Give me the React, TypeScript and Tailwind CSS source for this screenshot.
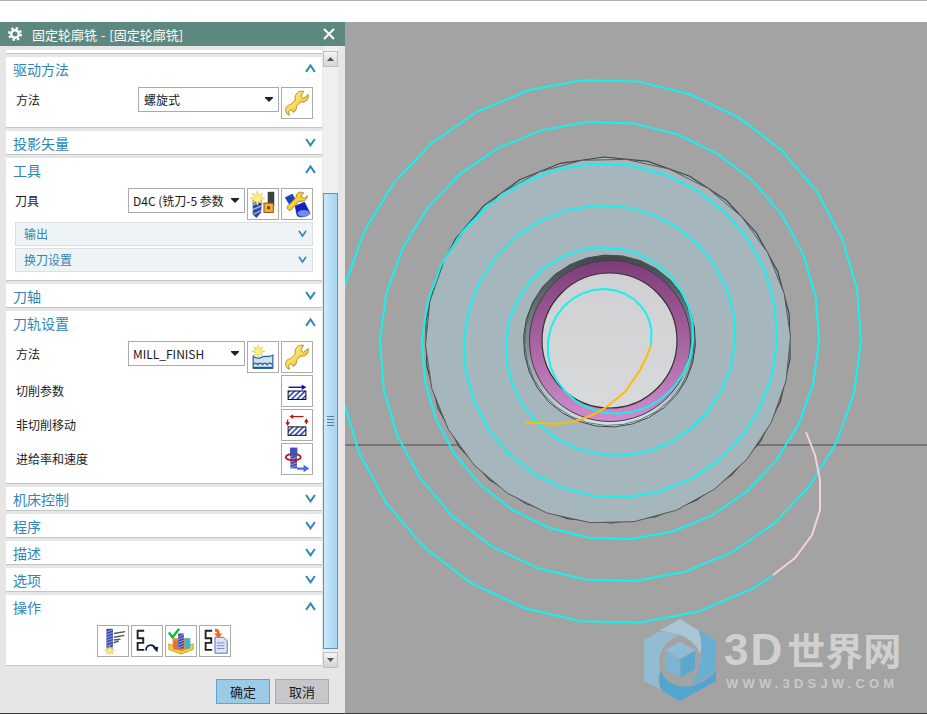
import React from "react";

const CJK = "'Noto Sans CJK SC','Liberation Sans',sans-serif";

function spiralPoints() {
  const pts: string[] = ["651,345"];
  const end = 5.847;
  const step = 1 / 30;
  const put = (t: number) => {
    const a = t * 2 * Math.PI;
    const r = 41 + 42 * t;
    pts.push(`${(610 + r * Math.cos(a)).toFixed(1)},${(341 - r * Math.sin(a)).toFixed(1)}`);
  };
  for (let i = 0; i * step < end; i++) put(i * step);
  pts.push("773,575");
  return pts.join(" ");
}

function ngon(cx: number, cy: number, r: number, n: number, rot = 0) {
  const pts: string[] = [];
  for (let i = 0; i < n; i++) {
    const a = (i / n) * 2 * Math.PI + rot;
    pts.push(`${(cx + r * Math.cos(a)).toFixed(1)},${(cy + r * Math.sin(a)).toFixed(1)}`);
  }
  return pts.join(" ");
}

function Chevron({ up, small }: { up?: boolean; small?: boolean }) {
  const s = small ? 9 : 11;
  return (
    <svg width={s} height={s * 0.8} viewBox="0 0 11 9" className="shrink-0">
      <path d={up ? "M1 8 L5.5 1.5 L10 8" : "M1 1 L5.5 7.5 L10 1"} fill="none" stroke="#2f8ab8" strokeWidth={small ? 2 : 2.1} />
    </svg>
  );
}

function Wrench({ id }: { id: string }) {
  return (
    <svg width="30" height="30" viewBox="0 0 32 32">
      <defs>
        <linearGradient id={id} x1="0" y1="0" x2="1" y2="1">
          <stop offset="0" stopColor="#fff6b8" />
          <stop offset="0.5" stopColor="#f9d955" />
          <stop offset="1" stopColor="#d99a18" />
        </linearGradient>
      </defs>
      <path
        d="M28 7 L23 11 L20 9 L23 3.500 C18 2.500 13.500 6 14 11.500 L14 13 L9 18 C7 18 4 19 4 23 C3.500 26 6 29 8 29 L7 25 L10 23 L12 26 C15 25 16 21 15.500 19 L20 15 C25 16 29 12 28 7Z"
        fill={`url(#${id})`}
        stroke="#b58a24"
        strokeWidth="1"
        strokeLinejoin="round"
      />
    </svg>
  );
}

function Hatch({ id, y = 15 }: { id: string; y?: number }) {
  return (
    <>
      <defs>
        <pattern id={id} width="4" height="4" patternUnits="userSpaceOnUse" patternTransform="rotate(45)">
          <rect width="4" height="4" fill="#ffffff" />
          <rect width="1.6" height="4" fill="#2233aa" />
        </pattern>
      </defs>
      <rect x="6.500" y={y} width="19" height="9" fill={`url(#${id})`} stroke="#000" strokeWidth="1" />
    </>
  );
}

function Star({ x, y, r = 5 }: { x: number; y: number; r?: number }) {
  const p: string[] = [];
  for (let i = 0; i < 16; i++) {
    const a = (i / 16) * Math.PI * 2;
    const q = i % 2 ? r * 0.45 : r;
    p.push(`${(x + q * Math.cos(a)).toFixed(1)},${(y + q * Math.sin(a)).toFixed(1)}`);
  }
  return <polygon points={p.join(" ")} fill="#fff27a" stroke="#c9b83c" strokeWidth="0.5" />;
}

function Drill({ x, y, w = 6, h = 18 }: { x: number; y: number; w?: number; h?: number }) {
  const lines = [];
  for (let i = 2; i < h; i += 3) {
    lines.push(<path key={i} d={`M${x} ${y + i + 1.5} L${x + w} ${y + i - 1}`} stroke="#9aa7e8" strokeWidth="1" />);
  }
  return (
    <g>
      <rect x={x} y={y} width={w} height={h} fill="#3b4aa8" />
      {lines}
    </g>
  );
}

const S = () => <path d="M13 5 H6 V13 H12 V18 H6 V25.500 H13" fill="none" stroke="#222" strokeWidth="2" />;

const Icons: Record<string, React.ReactNode> = {
  wrench: <Wrench id="w1" />,
  wrench2: <Wrench id="w2" />,
  toolNew: (
    <svg width="30" height="30" viewBox="0 0 32 32">
      <rect x="21" y="3" width="7" height="15" fill="#3e4044" />
      <rect x="17" y="15" width="10" height="10" fill="#f0b030" stroke="#8a4a10" strokeWidth="1" />
      <rect x="20.500" y="18.500" width="3" height="3" fill="#7a3a10" />
      <path d="M5 12 L15 12 L14 25 L9 31 L5 27 Z" fill="#3347a6" />
      <path d="M5 17 L15 13 M5 22 L14.500 18 M6 27 L14 23" stroke="#a9c4ee" strokeWidth="1.300" />
      <Star x={10} y={10} r={8} />
    </svg>
  ),
  toolEdit: (
    <svg width="30" height="30" viewBox="0 0 32 32">
      <path d="M3 9 L11 5 L16 13 L8 17 Z" fill="#1d3fc0" />
      <path d="M14 18 L24 14 L30 26 C26 30 18 31 16 28 Z" fill="#1220c8" stroke="#0a1280" strokeWidth="0.600" />
      <ellipse cx="23" cy="26" rx="6.500" ry="3.500" fill="#6f8cf0" />
      <path d="M23 4 C18 2 15 5 15 9 L6 18 C4 21 8 24 10 22 L18 13 C22 14 27 12 27 7 L24 10 L20 8 Z" fill="#f7cf3a" stroke="#9a6c12" strokeWidth="0.800" />
    </svg>
  ),
  methodNew: (
    <svg width="30" height="30" viewBox="0 0 32 32">
      <path d="M5.500 15 C9 18 12 18 15 16 C19 14 23 17 26.500 14 V28 H5.500 Z" fill="#cfe0f0" stroke="#1d5a96" strokeWidth="1.200" />
      <path d="M5.500 24 q2.500 -3 5 0 q2.500 -3 5 0 q2.500 -3 5 0 q2.500 -3 5.500 0" fill="none" stroke="#1d5a96" strokeWidth="1.500" />
      <path d="M5.500 27.500 H26.500" stroke="#1d5a96" strokeWidth="2" />
      <Star x={11} y={10} r={7} />
    </svg>
  ),
  cut: (
    <svg width="32" height="32" viewBox="0 0 32 32">
      <path d="M7 12 H22" stroke="#1010b8" strokeWidth="1.500" />
      <path d="M21 9 L26 12 L21 15 Z" fill="#1010b8" />
      <Hatch id="h1" y={16} />
    </svg>
  ),
  noncut: (
    <svg width="32" height="32" viewBox="0 0 32 32">
      <path d="M10 7 H23" stroke="#c01010" strokeWidth="1.300" />
      <path d="M12 4.500 L8 7 L12 9.500 Z" fill="#c01010" />
      <path d="M6 10 V15 M26 10 V15" stroke="#c01010" strokeWidth="1.400" />
      <path d="M3.500 13 L6 17 L8.500 13 Z" fill="#c01010" />
      <path d="M23.500 13 L26 9 L28.500 13 Z" fill="#c01010" />
      <Hatch id="h2" y={18} />
    </svg>
  ),
  feed: (
    <svg width="32" height="32" viewBox="0 0 32 32">
      <Drill x={9} y={4} w={7} h={22} />
      <ellipse cx="12" cy="14" rx="8" ry="3.500" fill="none" stroke="#c01818" strokeWidth="2" />
      <rect x="8.500" y="4" width="8" height="9" fill="#3f52b0" opacity="0.85" />
      <path d="M16 25 H23 V22 L29 26 L23 30 V27.500 H16 Z" fill="#3f6fe0" />
    </svg>
  ),
  gen: (
    <svg width="30" height="30" viewBox="0 0 32 32">
      <Drill x={9} y={3} w={7} h={21} />
      <path d="M17 8 L29 6 M17 12 L28 10 M17 15 L24 14 M16.500 18 L22 16" stroke="#555" strokeWidth="1.500" />
      <Star x={12.500} y={26} r={5} />
    </svg>
  ),
  replay: (
    <svg width="32" height="32" viewBox="0 0 32 32">
      <S />
      <path d="M15 26 C15 19 23 19 25 24" fill="none" stroke="#0c1a4a" strokeWidth="1.800" />
      <path d="M22 23 L28 22 L27 28 Z" fill="#0c1a4a" />
    </svg>
  ),
  verify: (
    <svg width="32" height="32" viewBox="0 0 32 32">
      <path d="M3 19 L16 24 L29 19 L29 25 L16 30 L3 25 Z" fill="#f2d23a" stroke="#a98a10" strokeWidth="0.700" />
      <path d="M7 13 H25 V24 L16 27 L7 24 Z" fill="#f28a2a" />
      <rect x="20" y="13" width="6" height="11" fill="#39b5d8" />
      <rect x="8" y="16" width="5" height="9" fill="#e86a4a" />
      <Drill x={13} y={8} w={6} h={16} />
      <path d="M3 7 L7 12 L14 3" fill="none" stroke="#12b83a" strokeWidth="2.600" />
    </svg>
  ),
  list: (
    <svg width="32" height="32" viewBox="0 0 32 32">
      <S />
      <path d="M16 12 H25 L29 16 V29 H16 Z" fill="#dde4f8" stroke="#5a6ab0" strokeWidth="1" />
      <path d="M18 18 H26 M18 21 H26 M18 24 H26" stroke="#7b86b8" strokeWidth="1" />
      <path d="M16 3 C20 3 21 5 21 8 H24 L19.500 13 L15 8 H18 C18 7 18 6 16 6 Z" fill="#ee6a20" />
    </svg>
  ),
};

function IconBtn({ name }: { name: string }) {
  return (
    <div className="flex h-[32px] w-[32px] shrink-0 items-center justify-center border border-[#ababab] bg-white">
      {Icons[name]}
    </div>
  );
}

function Select({ text, w, pl }: { text: string; w: string; pl: string }) {
  return (
    <div className={`flex h-[25px] shrink-0 items-center border border-[#ababab] bg-white pr-[5px] ${w} ${pl}`}>
      <span className="min-w-0 flex-1 whitespace-nowrap text-[12px] text-[#1a1a1a]">{text}</span>
      <svg width="8" height="5" viewBox="0 0 8 5" className="ml-[6px] shrink-0">
        <path d="M0 0 H8 V1 L4 5 L0 1 Z" fill="#222" />
      </svg>
    </div>
  );
}

function Head({ title, up }: { title: string; up?: boolean }) {
  return (
    <div className="flex h-[23px] items-center justify-between pl-[7px] pr-[6px]">
      <span className="text-[14px] leading-none text-[#2f86b4]">{title}</span>
      <Chevron up={up} />
    </div>
  );
}

function Collapsed({ title }: { title: string }) {
  return (
    <div className="h-[24px] border-b border-[#c4c4c4] bg-white">
      <Head title={title} />
    </div>
  );
}

function Sub({ title }: { title: string }) {
  return (
    <div className="flex h-[24px] items-center justify-between border border-[#dcdfe0] bg-[#eef4f5] pl-[8px] pr-[5px]">
      <span className="text-[12px] text-[#2f86b4]">{title}</span>
      <Chevron small />
    </div>
  );
}

function Label({ children, cls = "" }: { children: React.ReactNode; cls?: string }) {
  return <span className={`text-[12px] text-[#1a1a1a] ${cls}`}>{children}</span>;
}

function ActionRow({ label, icon }: { label: string; icon: string }) {
  return (
    <div className="flex h-[32px] items-center justify-between pl-[9px]">
      <Label>{label}</Label>
      <IconBtn name={icon} />
    </div>
  );
}

function ScrollArrow({ up }: { up?: boolean }) {
  return (
    <div className="flex h-[16px] w-[15px] items-center justify-center border border-[#c0c0c0] bg-gradient-to-b from-[#f4f4f4] to-[#d4d4d4]">
      <svg width="7" height="4" viewBox="0 0 7 4">
        <path d={up ? "M0 4 L3.500 0 L7 4 Z" : "M0 0 L7 0 L3.500 4 Z"} fill="#555" />
      </svg>
    </div>
  );
}

function Scrollbar() {
  return (
    <div className="ml-[1px] flex h-[622px] w-[15px] shrink-0 flex-col bg-[#efefef] pt-[5px]">
      <ScrollArrow up />
      <div className="h-[126px]" />
      <div className="flex h-[457px] items-center justify-center border border-[#5c93bd] bg-gradient-to-r from-[#d3eafa] via-[#b5dcf6] to-[#a6d4f2]">
        <div className="flex flex-col gap-[2px]">
          <div className="h-[1px] w-[7px] bg-[#5d7d95]" />
          <div className="h-[1px] w-[7px] bg-[#5d7d95]" />
          <div className="h-[1px] w-[7px] bg-[#5d7d95]" />
          <div className="h-[1px] w-[7px] bg-[#5d7d95]" />
        </div>
      </div>
      <div className="h-[3px]" />
      <ScrollArrow />
    </div>
  );
}

function Panel() {
  return (
    <div className="flex w-[345px] shrink-0 flex-col bg-[#e6e6e6]" style={{ fontFamily: CJK }}>
      <div className="flex h-[24px] shrink-0 items-center bg-[#5d8880] pl-[8px] pr-[10px] text-white">
        <svg width="14" height="14" viewBox="0 0 14 14" className="shrink-0">
          <circle cx="7" cy="7" r="3.800" fill="none" stroke="#fff" strokeWidth="2.600" />
          <circle cx="7" cy="7" r="6" fill="none" stroke="#fff" strokeWidth="2" strokeDasharray="2.400 2.310" />
        </svg>
        <span className="ml-[10px] flex-1 whitespace-nowrap text-[13px] leading-none [word-spacing:1px]">固定轮廓铣 - [固定轮廓铣]</span>
        <svg width="12" height="12" viewBox="0 0 12 12" className="shrink-0">
          <path d="M1 1 L11 11 M11 1 L1 11" stroke="#fff" strokeWidth="2" />
        </svg>
      </div>
      <div className="flex items-start pl-[6px]">
        <div className="flex w-[316px] shrink-0 flex-col gap-[3px] pt-[4px]">
          <div className="h-[4px] border-b border-[#c4c4c4] bg-white" />
          <div className="h-[71px] border-b border-[#c4c4c4] bg-white">
            <Head title="驱动方法" up />
            <div className="flex items-start pl-[10px] pr-[9px] pt-[7px]">
              <Label cls="flex h-[25px] flex-1 items-center">方法</Label>
              <Select text="螺旋式" w="w-[141px]" pl="pl-[5px]" />
              <div className="w-[2px]" />
              <IconBtn name="wrench" />
            </div>
          </div>
          <Collapsed title="投影矢量" />
          <div className="h-[123px] border-b border-[#c4c4c4] bg-white">
            <Head title="工具" up />
            <div className="flex items-start pl-[9px] pr-[9px] pt-[7px]">
              <Label cls="flex h-[25px] flex-1 items-center">刀具</Label>
              <Select text="D4C (铣刀-5 参数" w="w-[117px]" pl="pl-[4px]" />
              <div className="w-[2px]" />
              <IconBtn name="toolNew" />
              <div className="w-[2px]" />
              <IconBtn name="toolEdit" />
            </div>
            <div className="mt-[2px] flex flex-col gap-[2px] pl-[9px] pr-[9px]">
              <Sub title="输出" />
              <Sub title="换刀设置" />
            </div>
          </div>
          <Collapsed title="刀轴" />
          <div className="h-[173px] border-b border-[#c4c4c4] bg-white">
            <Head title="刀轨设置" up />
            <div className="flex flex-col gap-[2px] pl-[1px] pr-[9px] pt-[7px]">
              <div className="flex items-start pl-[9px]">
                <Label cls="flex h-[25px] flex-1 items-center">方法</Label>
                <Select text="MILL_FINISH" w="w-[117px]" pl="pl-[4px]" />
                <div className="w-[2px]" />
                <IconBtn name="methodNew" />
                <div className="w-[2px]" />
                <IconBtn name="wrench2" />
              </div>
              <ActionRow label="切削参数" icon="cut" />
              <ActionRow label="非切削移动" icon="noncut" />
              <ActionRow label="进给率和速度" icon="feed" />
            </div>
          </div>
          <Collapsed title="机床控制" />
          <Collapsed title="程序" />
          <Collapsed title="描述" />
          <Collapsed title="选项" />
          <div className="h-[71px] border-b border-[#c4c4c4] bg-white">
            <Head title="操作" up />
            <div className="flex justify-center gap-[2px] pt-[7px]">
              <IconBtn name="gen" />
              <IconBtn name="replay" />
              <IconBtn name="verify" />
              <IconBtn name="list" />
            </div>
          </div>
        </div>
        <Scrollbar />
      </div>
      <div className="flex justify-end gap-[5px] pr-[16px] pt-[11px]">
        <div className="flex h-[25px] w-[54px] items-center justify-center border border-[#5ba6d0] bg-[#9bcbe6] text-[13px] text-[#1a1a1a]">确定</div>
        <div className="flex h-[25px] w-[54px] items-center justify-center border border-[#ababab] bg-[#c6c7cb] text-[13px] text-[#1a1a1a]">取消</div>
      </div>
    </div>
  );
}

function Canvas() {
  return (
    <div className="relative min-w-0 flex-1 overflow-hidden bg-[#a3a3a3]">
      <svg className="block h-full w-full" viewBox="345 22 582 691" preserveAspectRatio="none">
        <defs>
          <linearGradient id="mag" x1="0" y1="0" x2="0" y2="1">
            <stop offset="0" stopColor="#7d3d78" />
            <stop offset="0.5" stopColor="#a763a0" />
            <stop offset="1" stopColor="#cf8dcc" />
          </linearGradient>
          <linearGradient id="rim" x1="0" y1="0" x2="0" y2="1">
            <stop offset="0" stopColor="#3d484a" />
            <stop offset="0.5" stopColor="#7d8e92" />
            <stop offset="1" stopColor="#cfe6ea" />
          </linearGradient>
          <linearGradient id="core" x1="0" y1="0" x2="0" y2="1">
            <stop offset="0" stopColor="#d0d0d2" />
            <stop offset="1" stopColor="#d8d9db" />
          </linearGradient>
        </defs>
        <path d="M345 445 H927" stroke="#4d4d4d" strokeWidth="1" />
        <polygon points={ngon(608, 340, 183, 26, 0.1)} fill="#a5b7bd" stroke="#3f4446" strokeWidth="1.200" />
        <polygon points={ngon(608, 341, 182.500, 26, 0.22)} fill="#a5b7bd" stroke="#55595b" strokeWidth="1" />
        <polygon points={ngon(609.5, 341, 86, 30, 0.05)} fill="url(#rim)" stroke="#3f4446" strokeWidth="1" />
        <polygon points={ngon(609.5, 340.5, 85, 30, 0.15)} fill="none" stroke="#50575a" strokeWidth="0.800" />
        <circle cx="610" cy="341" r="80.500" fill="url(#mag)" stroke="#4a3a4a" strokeWidth="1" />
        <circle cx="609.500" cy="340.500" r="67.500" fill="url(#core)" stroke="#333" strokeWidth="1.200" />
        <polyline points={spiralPoints()} fill="none" stroke="#14f2f0" strokeWidth="2" strokeLinejoin="round" />
        <polyline
          points="651,345 647,356 640,370 625,392 605,408 592,415 580,420 565,423 552,424 538,423 525,422"
          fill="none"
          stroke="#fdbb0c"
          strokeWidth="2"
        />
        <polyline
          points="773,575 795,558 812,535 820,510 820,480 815,455 806,432"
          fill="none"
          stroke="#f6cfe0"
          strokeWidth="2"
        />
        <polygon points="680,619 716,640 716,681 680,701 644,681 644,640" fill="#a3a3a3" />
        <path d="M659 631 L680 619 L698 630 Q703 642 700 654 Q695 640 680 635 Q668 631 659 631Z" fill="#a8c6d6" />
        <path d="M699 630 L716 640 L716 668 Q706 680 691 685 Q700 675 701 655 Q704 642 699 630Z" fill="#69aed3" />
        <path d="M716 670 L716 681 L680 701 L662 691 Q657 680 661 671 Q668 688 690 686.500 Q706 683 716 670Z" fill="#51a5cf" />
        <path d="M644 640 L658 632 Q672 631 679 636 Q664 640 660 655 Q658 665 660 670 Q656 680 661 690 L644 681Z" fill="#93bcd2" />
        <polygon points="680,642 695,650 680,659 665,650" fill="#8ebcd6" />
        <polygon points="665,651 679.500,659.500 679.500,678 665,669" fill="#7db3d3" />
        <polygon points="695,651 680.500,659.500 680.500,678 695,669" fill="#5aa7d0" />
      </svg>
      <div className="absolute left-[379px] top-[606px] flex items-baseline whitespace-nowrap font-bold leading-none text-[#d0d0d0]">
        <span className="text-[44px] tracking-[2px]" style={{ fontFamily: "'Liberation Sans',sans-serif" }}>3D</span>
        <span className="ml-[3px] text-[38px]" style={{ fontFamily: CJK }}>世界网</span>
      </div>
      <div
        className="absolute left-[381px] top-[655px] whitespace-nowrap text-[13px] font-bold leading-none tracking-[4.200px] text-[#c9c9c9]"
        style={{ fontFamily: "'Liberation Sans',sans-serif" }}
      >
        WWW.3DSJW.COM
      </div>
    </div>
  );
}

export default function App() {
  return (
    <div className="flex h-[714px] w-[927px] flex-col overflow-hidden bg-white">
      <div className="h-[22px] shrink-0 border-t border-[#b0b0b0] bg-white" />
      <div className="flex h-[692px] border-b border-[#3a3a3a]">
        <Panel />
        <Canvas />
      </div>
    </div>
  );
}
